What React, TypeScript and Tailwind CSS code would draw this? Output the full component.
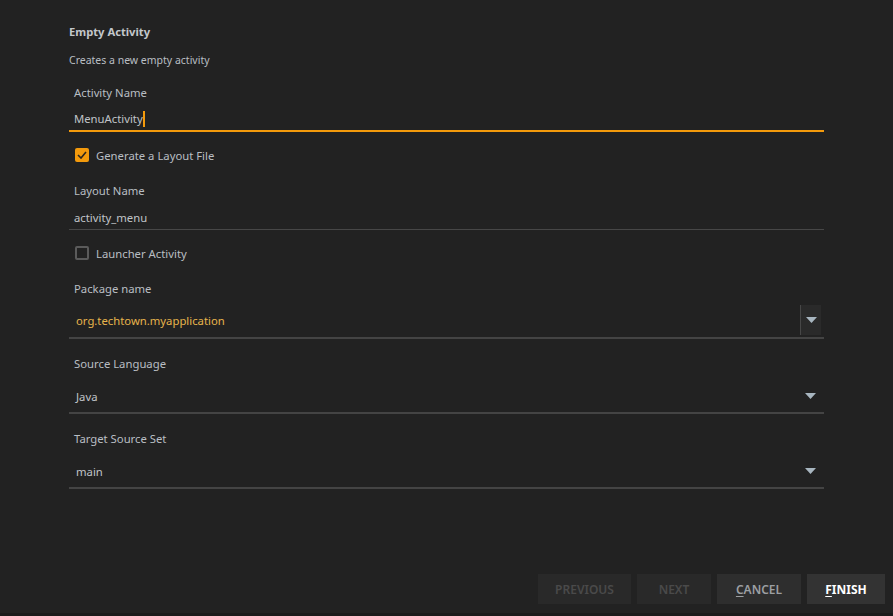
import React from "react";

const font = { fontFamily: '"Noto Sans", "Open Sans", sans-serif' };

function Arrow() {
  return (
    <svg width="11" height="6" viewBox="0 0 11 6" className="block">
      <path d="M0 0 H11 L5.5 6 Z" fill="#a8b6c0" />
    </svg>
  );
}

function Label({ children, className = "" }: { children: React.ReactNode; className?: string }) {
  return <div className={"h-4 leading-[18px] pl-[5px] text-[11.3px] text-[#b9bec3] " + className}>{children}</div>;
}

function Check({ checked, label, className = "" }: { checked: boolean; label: string; className?: string }) {
  return (
    <div className={"h-4 flex items-center pl-[6px] " + className}>
      {checked ? (
        <div className="w-[14px] h-[14px] rounded-[2px] bg-[#f39a0c] flex items-center justify-center">
          <svg width="10" height="8" viewBox="0 0 10 8">
            <path d="M1 4 L4 7 L9 1" stroke="#2a2520" strokeWidth="1.6" fill="none" />
          </svg>
        </div>
      ) : (
        <div className="w-[14px] h-[14px] rounded-[2px] border-2 border-[#5b5b5b]" />
      )}
      <span className="ml-[7px] pt-[2px] text-[11.3px] leading-4 text-[#b9bec3]">{label}</span>
    </div>
  );
}

function Select({ value, boxed, className = "", valueColor = "text-[#c0c4c8]" }: { value: string; boxed?: boolean; className?: string; valueColor?: string }) {
  return (
    <div className={"border-b-2 border-[#444444] " + className}>
      <div className="h-[30px] flex items-center justify-between pl-[7px] pr-[3px]">
        <span className={"pt-[2px] text-[11.3px] leading-4 " + valueColor}>{value}</span>
        {boxed ? (
          <div className="w-[21px] h-[30px] bg-[#2a2a2a] border-l border-[#474747] flex items-center justify-center">
            <Arrow />
          </div>
        ) : (
          <div className="w-[21px] h-[30px] flex items-center justify-center">
            <Arrow />
          </div>
        )}
      </div>
    </div>
  );
}

export default function App() {
  return (
    <div className="w-[893px] h-[616px] bg-[#222222] flex flex-col overflow-hidden" style={font}>
      <div className="flex-1 pl-[69px] pt-[23px]">
        <div className="w-[755px] flex flex-col">
          <div className="h-4 leading-[18px] text-[11.2px] font-bold text-[#c3c7cb]">Empty Activity</div>
          <div className="mt-[13px] h-[14px] leading-[16px] text-[10.5px] text-[#b9bec3]">Creates a new empty activity</div>

          <Label className="mt-[18px]">Activity Name</Label>
          <div className="mt-[10px] pb-[4px] border-b-2 border-[#f39a0c]">
            <div className="h-4 pl-[5px] text-[11.3px] text-[#c0c4c8] flex items-center">
              <span className="pt-[2px] leading-4">MenuActivity</span>
              <span className="inline-block w-[2px] h-[16px] mt-[2px] bg-[#f39a0c]" />
            </div>
          </div>

          <Check checked label="Generate a Layout File" className="mt-[15px]" />

          <Label className="mt-[19px]">Layout Name</Label>
          <div className="mt-[11px] pb-[4px] border-b border-[#474747]">
            <div className="h-4 leading-[18px] pl-[5px] text-[11.3px] text-[#c0c4c8]">activity_menu</div>
          </div>

          <Check checked={false} label="Launcher Activity" className="mt-[15px]" />

          <Label className="mt-[19px]">Package name</Label>
          <Select value="org.techtown.myapplication" boxed className="mt-[9px] pb-[2px]" valueColor="text-[#e6b44c]" />

          <Label className="mt-[16px]">Source Language</Label>
          <Select value="Java" className="mt-[10px] pb-[1px]" />

          <Label className="mt-[16px]">Target Source Set</Label>
          <Select value="main" className="mt-[10px] pb-[1px]" />
        </div>
      </div>

      <div className="flex justify-end gap-[6px] pr-[8px] pb-[9px]">
        <div className="w-[93px] h-[30px] bg-[#292929] flex items-center justify-center pt-[2px] text-[12px] font-semibold text-[#4a4a4a]">PREVIOUS</div>
        <div className="w-[74px] h-[30px] bg-[#292929] flex items-center justify-center pt-[2px] text-[12px] font-semibold text-[#4a4a4a]">NEXT</div>
        <div className="w-[84px] h-[30px] bg-[#2e2e2e] flex items-center justify-center pt-[2px] text-[12px] font-semibold text-[#9c9fa2]">
          <span className="underline underline-offset-2">C</span>ANCEL
        </div>
        <div className="w-[78px] h-[30px] bg-[#333333] flex items-center justify-center pt-[2px] text-[12px] font-bold text-[#ffffff]">
          <span className="underline underline-offset-2">F</span>INISH
        </div>
      </div>
      <div className="h-[3px] bg-[#1b1b1b]" />
    </div>
  );
}
